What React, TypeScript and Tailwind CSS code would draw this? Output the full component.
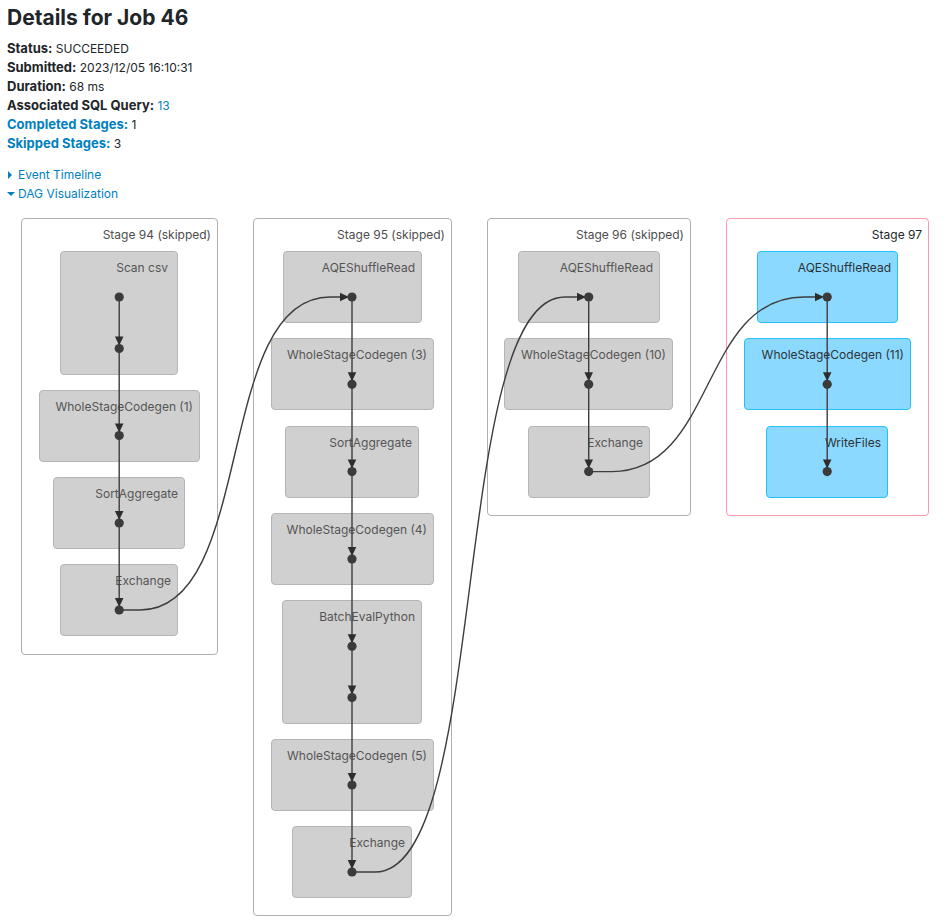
type Cluster = {
  name: string;
  left: number;
  top: number;
  width: number;
  height: number;
  inset?: string;
};

type Stage = {
  title: string;
  skipped: boolean;
  left: number;
  width: number;
  height: number;
  clusters: Cluster[];
};

// Coordinates are relative to the top-left corner of the graph canvas.
const stages: Stage[] = [
  {
    title: "Stage 94 (skipped)",
    skipped: true,
    left: 21,
    width: 197,
    height: 437,
    clusters: [
      { name: "Scan csv", left: 60, top: 33, width: 118, height: 124, inset: "pr-[9px]" },
      { name: "WholeStageCodegen (1)", left: 39, top: 172, width: 161, height: 72 },
      { name: "SortAggregate", left: 53, top: 259, width: 132, height: 72 },
      { name: "Exchange", left: 60, top: 346, width: 118, height: 72 },
    ],
  },
  {
    title: "Stage 95 (skipped)",
    skipped: true,
    left: 253,
    width: 199,
    height: 698,
    clusters: [
      { name: "AQEShuffleRead", left: 283, top: 33, width: 139, height: 72 },
      { name: "WholeStageCodegen (3)", left: 271, top: 120, width: 163, height: 72 },
      { name: "SortAggregate", left: 285, top: 208, width: 134, height: 72 },
      { name: "WholeStageCodegen (4)", left: 271, top: 295, width: 163, height: 72 },
      { name: "BatchEvalPython", left: 282, top: 382, width: 140, height: 124 },
      { name: "WholeStageCodegen (5)", left: 271, top: 521, width: 163, height: 72 },
      { name: "Exchange", left: 292, top: 608, width: 120, height: 72 },
    ],
  },
  {
    title: "Stage 96 (skipped)",
    skipped: true,
    left: 487,
    width: 204,
    height: 298,
    clusters: [
      { name: "AQEShuffleRead", left: 518, top: 33, width: 142, height: 72 },
      { name: "WholeStageCodegen (10)", left: 504, top: 120, width: 169, height: 72 },
      { name: "Exchange", left: 528, top: 208, width: 122, height: 72 },
    ],
  },
  {
    title: "Stage 97",
    skipped: false,
    left: 726,
    width: 203,
    height: 298,
    clusters: [
      { name: "AQEShuffleRead", left: 757, top: 33, width: 141, height: 72 },
      { name: "WholeStageCodegen (11)", left: 744, top: 120, width: 167, height: 72 },
      { name: "WriteFiles", left: 766, top: 208, width: 122, height: 72 },
    ],
  },
];

const chains = [
  { x: 119.2, ys: [79, 130.5, 217.5, 305, 392] },
  { x: 352, ys: [79, 166.3, 253.6, 341, 428.3, 479.5, 567, 654] },
  { x: 588.7, ys: [79, 166.3, 253.6] },
  { x: 827.2, ys: [79, 166.3, 253.6] },
];

const crossEdges = [
  "M119 392H140C256 392 214 79 330 79H341",
  "M352 654H375C491 654 449 79 565 79H578",
  "M589 253.6H612C716 253.6 700 79 804 79H816",
];

const arrowTips = [
  { x: 349, y: 79 },
  { x: 586, y: 79 },
  { x: 824, y: 79 },
];

function StageBox({ stage }: { stage: Stage }) {
  const frame = stage.skipped ? "border-[#b0b0b0] text-[#4d4d4d]" : "border-[#ff99ad] text-[#212529]";
  const fill = stage.skipped
    ? "border-[#b5b5b5] bg-[#d0d0d0] text-[#555555]"
    : "border-[#26c0f5] bg-[#8cd9ff] text-[#2b3338]";
  return (
    <>
      <div
        className={`absolute top-0 rounded-[4px] border pt-1.5 pr-1.5 text-right ${frame}`}
        style={{ left: stage.left, width: stage.width, height: stage.height }}
      >
        {stage.title}
      </div>
      {stage.clusters.map((c) => (
        <div
          key={c.name}
          className={`absolute rounded-[4px] border pt-1.5 text-right whitespace-nowrap ${c.inset ?? "pr-1.5"} ${fill}`}
          style={{ left: c.left, top: c.top, width: c.width, height: c.height }}
        >
          {c.name}
        </div>
      ))}
    </>
  );
}

function Edges() {
  return (
    <svg className="absolute top-0 left-0" width="946" height="706" viewBox="0 0 946 706" fill="none" aria-hidden="true">
      <g stroke="#3d3d3d" strokeWidth="1.4">
        {crossEdges.map((d) => (
          <path key={d} d={d} />
        ))}
        {chains.map((c) => (
          <path key={c.x} d={`M${c.x} ${c.ys[0]}V${c.ys[c.ys.length - 1]}`} />
        ))}
      </g>
      {arrowTips.map((t) => (
        <path key={t.x} d={`M${t.x} ${t.y}l-9 -4.3v8.6z`} fill="#2d2d2d" />
      ))}
      {chains.map((c) =>
        c.ys.map((y, i) => (
          <g key={`${c.x}-${y}`}>
            {i > 0 && <path d={`M${c.x} ${y - 3}l-4.3 -9h8.6z`} fill="#2d2d2d" />}
            <circle cx={c.x} cy={y} r="4.6" fill="#3b3b3b" />
          </g>
        )),
      )}
    </svg>
  );
}

export default function App() {
  return (
    <main className="min-h-screen bg-white font-['Inter','Liberation_Sans',sans-serif] text-[12px] leading-[19px] text-[#212529]">
      <header className="px-[7px] pt-[5px]">
        <h1 className="text-[21px] leading-[26px] font-bold">Details for Job 46</h1>
        <ul className="mt-2">
          <li><strong className="text-[13px]">Status:</strong> SUCCEEDED</li>
          <li><strong className="text-[13px]">Submitted:</strong> 2023/12/05 16:10:31</li>
          <li><strong className="text-[13px]">Duration:</strong> 68 ms</li>
          <li><strong className="text-[13px]">Associated SQL Query:</strong> <a href="#sql-13" className="text-[#0080c0]">13</a></li>
          <li><a href="#completed" className="text-[13px] font-bold text-[#0080c0]">Completed Stages:</a> 1</li>
          <li><a href="#skipped" className="text-[13px] font-bold text-[#0080c0]">Skipped Stages:</a> 3</li>
        </ul>
        <div className="mt-3 flex flex-col items-start text-[#0080c0]">
          <button type="button" aria-expanded="false" className="flex items-center gap-[3px]">
            <svg width="8" height="8" viewBox="0 0 8 8" aria-hidden="true">
              <path d="M1 0L5 4L1 8z" fill="currentColor" />
            </svg>
            Event Timeline
          </button>
          <button type="button" aria-expanded="true" className="flex items-center gap-[3px]">
            <svg width="8" height="8" viewBox="0 0 8 8" aria-hidden="true">
              <path d="M0 2h8L4 6z" fill="currentColor" />
            </svg>
            DAG Visualization
          </button>
        </div>
      </header>
      <section aria-label="DAG Visualization" className="relative mt-[15px] h-[706px] overflow-hidden">
        {stages.map((s) => (
          <StageBox key={s.title} stage={s} />
        ))}
        <Edges />
      </section>
    </main>
  );
}
